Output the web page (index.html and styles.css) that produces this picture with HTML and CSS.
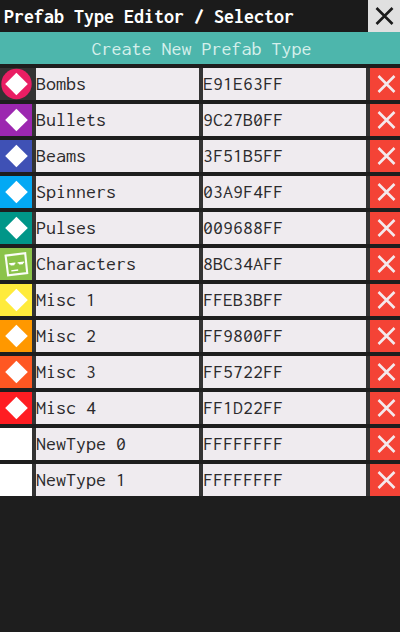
FILE: index.html
```
<!DOCTYPE html>
<html lang="en">
<head>
<meta charset="utf-8">
<title>Prefab Type Editor / Selector</title>
<link rel="stylesheet" href="styles.css">
</head>
<body>
<svg class="defs" aria-hidden="true">
<symbol id="cross" viewBox="0 0 32 32"><path d="M8.5 8 24.5 24M24.5 8 8.5 24" fill="none" stroke="currentColor" stroke-width="2.6"/></symbol>
<symbol id="diamond" viewBox="0 0 32 32"><path d="M16.4 4.7 27.8 16 16.4 27.3 5.2 16Z" fill="#fff"/></symbol>
<symbol id="bomb" viewBox="0 0 32 32"><circle cx="16.5" cy="16" r="15.2" fill="#e91e63"/><path d="M16.4 4.7 27.8 16 16.4 27.3 5.2 16Z" fill="#fff"/></symbol>
<symbol id="face" viewBox="0 0 32 32"><path d="M5.6 7.6 25.2 5.2 27.2 25.1 8.1 27.3Z" fill="none" stroke="#fafcf6" stroke-width="2.1"/><path d="M9 15.8 15.4 15.2M17.6 14.8 24.2 14.2" stroke="#fff" stroke-width="1.2"/><path d="M9.8 15.7 15 15.3 14.3 17.3 10.8 17.6ZM18.6 14.9 23.6 14.5 22.8 16.3 19.3 16.6Z" fill="#fff"/><path d="M11.3 22.9 18.2 22" stroke="#fff" stroke-width="1.3"/></symbol>
</svg>
<header class="titlebar"><h1>Prefab Type Editor / Selector</h1><button class="close" aria-label="Close"><svg><use href="#cross"/></svg></button></header>
<button class="create">Create New Prefab Type</button>
<main class="list" id="list"></main>
<script src="app.js"></script>
</body>
</html>
```
FILE: styles.css
```
* { box-sizing: border-box; }
body { margin: 0; height: 632px; overflow: hidden; background: #1e1e1e; font: 20px/32px "Inconsolata", "DejaVu Sans Mono", monospace; color: #2b2a2c; }
button { border: 0; padding: 0; margin: 0; font: inherit; border-radius: 0; }
svg { display: block; width: 32px; height: 32px; }
.defs { display: none; }
.titlebar { display: flex; justify-content: space-between; height: 32px; background: #1b1b1b; color: #fff; }
h1 { margin: 0; padding: 1px 0 0 4px; font-size: 20px; font-weight: 700; line-height: 31px; white-space: pre; }
.close { width: 32px; background: #e0e0e0; color: #1b1b1b; }
.create { display: block; width: 100%; height: 32px; padding: 2px 0 0 3px; background: #4db6ac; color: #d5efeb; line-height: 30px; }
.list { display: grid; gap: 4px; padding-top: 4px; }
.row { display: grid; grid-template-columns: 32px 163px 163px 32px; column-gap: 4px; height: 32px; background: #333; width: 402px; }
.field { background: #efebef; white-space: pre; overflow: hidden; line-height: 32px; }
.delete { background: #f44336; color: #f4e9ed; }
```
FILE: app.js
```
const types = [
  ["Bombs", "E91E63FF", "bomb"],
  ["Bullets", "9C27B0FF", "diamond"],
  ["Beams", "3F51B5FF", "diamond"],
  ["Spinners", "03A9F4FF", "diamond"],
  ["Pulses", "009688FF", "diamond"],
  ["Characters", "8BC34AFF", "face"],
  ["Misc 1", "FFEB3BFF", "diamond"],
  ["Misc 2", "FF9800FF", "diamond"],
  ["Misc 3", "FF5722FF", "diamond"],
  ["Misc 4", "FF1D22FF", "diamond"],
  ["NewType 0", "FFFFFFFF", ""],
  ["NewType 1", "FFFFFFFF", ""]
];
document.getElementById("list").innerHTML = types.map(([name, color, icon]) => `
  <div class="row">
    <div class="icon" style="background:${icon === "bomb" ? "#333" : "#" + color}">${icon ? `<svg><use href="#${icon}"/></svg>` : ""}</div>
    <div class="field">${name}</div>
    <div class="field">${color}</div>
    <button class="delete" aria-label="Delete ${name}"><svg><use href="#cross"/></svg></button>
  </div>`).join("");
```
